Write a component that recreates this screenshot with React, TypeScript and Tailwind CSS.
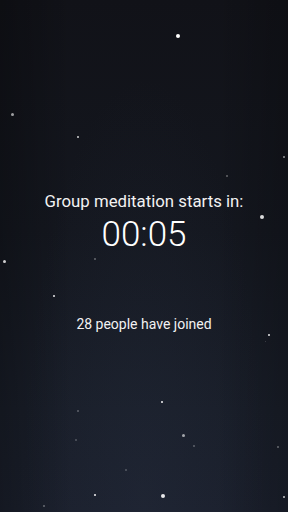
import React from "react";

type Star = { x: number; y: number; s: number; o: number };

const stars: Star[] = [
  { x: 178, y: 36, s: 4, o: 1 },
  { x: 12, y: 114, s: 3, o: 0.6 },
  { x: 78, y: 137, s: 2.5, o: 0.8 },
  { x: 284, y: 157, s: 2, o: 0.55 },
  { x: 227, y: 176, s: 1.5, o: 0.35 },
  { x: 262, y: 217, s: 3.5, o: 0.85 },
  { x: 4, y: 261, s: 3, o: 0.8 },
  { x: 95, y: 259, s: 1.5, o: 0.35 },
  { x: 54, y: 296, s: 2.5, o: 0.9 },
  { x: 269, y: 335, s: 2.5, o: 0.9 },
  { x: 265, y: 341, s: 1, o: 0.2 },
  { x: 162, y: 402, s: 2.5, o: 0.95 },
  { x: 78, y: 411, s: 1.5, o: 0.3 },
  { x: 76, y: 440, s: 1.5, o: 0.25 },
  { x: 183, y: 435, s: 3, o: 0.6 },
  { x: 194, y: 446, s: 1.5, o: 0.3 },
  { x: 278, y: 447, s: 1.5, o: 0.35 },
  { x: 126, y: 470, s: 1.5, o: 0.25 },
  { x: 95, y: 495, s: 2.5, o: 0.95 },
  { x: 163, y: 496, s: 3.5, o: 0.9 },
  { x: 44, y: 506, s: 1.5, o: 0.35 },
  { x: 284, y: 497, s: 2, o: 0.75 },
];

export default function App() {
  return (
    <div
      className="relative w-[288px] h-[512px] overflow-hidden bg-[linear-gradient(180deg,#111218_0%,#14171f_45%,#191e29_80%,#1b202d_100%)] text-white"
      style={{ fontFamily: "Roboto, 'Noto Sans', sans-serif" }}
    >
      <div className="absolute inset-0 bg-[radial-gradient(ellipse_at_50%_100%,rgba(40,48,66,0.3)_0%,rgba(0,0,0,0)_60%)]" />
      <div className="absolute inset-0 bg-[linear-gradient(90deg,rgba(0,0,0,0.25)_0%,rgba(0,0,0,0)_25%,rgba(0,0,0,0)_75%,rgba(0,0,0,0.2)_100%)]" />
      {stars.map((st, i) => (
        <div
          key={i}
          className="absolute rounded-full bg-white"
          style={{
            left: st.x - st.s / 2,
            top: st.y - st.s / 2,
            width: st.s,
            height: st.s,
            opacity: st.o,
          }}
        />
      ))}
      <div className="relative flex flex-col items-center pt-[191px]">
        <div className="text-[16.8px] leading-[20px] text-[#f2f2f2]">
          Group meditation starts in:
        </div>
        <div className="mt-[7px] text-[35px] leading-[34px] font-light text-white">
          00:05
        </div>
        <div className="mt-[62px] text-[14px] leading-[20px] text-[#f2f2f2]">
          28 people have joined
        </div>
      </div>
    </div>
  );
}
